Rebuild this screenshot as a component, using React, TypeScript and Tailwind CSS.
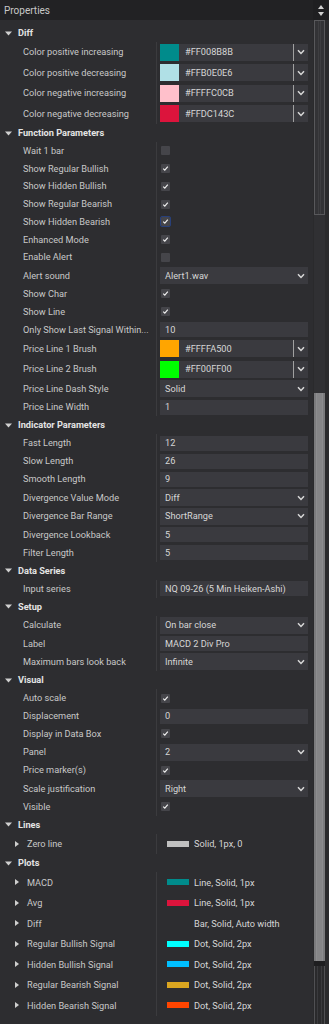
import React from "react";

type Row =
  | { k: "color"; label: string; color: string; hex: string }
  | { k: "check"; label: string; on: boolean; focus?: boolean }
  | { k: "dd"; label: string; value: string }
  | { k: "text"; label: string; value: string }
  | { k: "plot"; label: string; color?: string; desc: string };

type Section = { title: string; rows: Row[] };

const SECTIONS: Section[] = [
  {
    title: "Diff",
    rows: [
      { k: "color", label: "Color positive increasing", color: "#008B8B", hex: "#FF008B8B" },
      { k: "color", label: "Color positive decreasing", color: "#B0E0E6", hex: "#FFB0E0E6" },
      { k: "color", label: "Color negative increasing", color: "#FFC0CB", hex: "#FFFFC0CB" },
      { k: "color", label: "Color negative decreasing", color: "#DC143C", hex: "#FFDC143C" },
    ],
  },
  {
    title: "Function Parameters",
    rows: [
      { k: "check", label: "Wait 1 bar", on: false },
      { k: "check", label: "Show Regular Bullish", on: true },
      { k: "check", label: "Show Hidden Bullish", on: true },
      { k: "check", label: "Show Regular Bearish", on: true },
      { k: "check", label: "Show Hidden Bearish", on: true, focus: true },
      { k: "check", label: "Enhanced Mode", on: true },
      { k: "check", label: "Enable Alert", on: false },
      { k: "dd", label: "Alert sound", value: "Alert1.wav" },
      { k: "check", label: "Show Char", on: true },
      { k: "check", label: "Show Line", on: true },
      { k: "text", label: "Only Show Last Signal Within...", value: "10" },
      { k: "color", label: "Price Line 1 Brush", color: "#FFA500", hex: "#FFFFA500" },
      { k: "color", label: "Price Line 2 Brush", color: "#00FF00", hex: "#FF00FF00" },
      { k: "dd", label: "Price Line Dash Style", value: "Solid" },
      { k: "text", label: "Price Line Width", value: "1" },
    ],
  },
  {
    title: "Indicator Parameters",
    rows: [
      { k: "text", label: "Fast Length", value: "12" },
      { k: "text", label: "Slow Length", value: "26" },
      { k: "text", label: "Smooth Length", value: "9" },
      { k: "dd", label: "Divergence Value Mode", value: "Diff" },
      { k: "dd", label: "Divergence Bar Range", value: "ShortRange" },
      { k: "text", label: "Divergence Lookback", value: "5" },
      { k: "text", label: "Filter Length", value: "5" },
    ],
  },
  {
    title: "Data Series",
    rows: [{ k: "text", label: "Input series", value: "NQ 09-26 (5 Min Heiken-Ashi)" }],
  },
  {
    title: "Setup",
    rows: [
      { k: "dd", label: "Calculate", value: "On bar close" },
      { k: "text", label: "Label", value: "MACD 2 Div Pro" },
      { k: "dd", label: "Maximum bars look back", value: "Infinite" },
    ],
  },
  {
    title: "Visual",
    rows: [
      { k: "check", label: "Auto scale", on: true },
      { k: "text", label: "Displacement", value: "0" },
      { k: "check", label: "Display in Data Box", on: true },
      { k: "dd", label: "Panel", value: "2" },
      { k: "check", label: "Price marker(s)", on: true },
      { k: "dd", label: "Scale justification", value: "Right" },
      { k: "check", label: "Visible", on: true },
    ],
  },
  {
    title: "Lines",
    rows: [{ k: "plot", label: "Zero line", color: "#C0C0C0", desc: "Solid, 1px, 0" }],
  },
  {
    title: "Plots",
    rows: [
      { k: "plot", label: "MACD", color: "#008B8B", desc: "Line, Solid, 1px" },
      { k: "plot", label: "Avg", color: "#DC143C", desc: "Line, Solid, 1px" },
      { k: "plot", label: "Diff", desc: "Bar, Solid, Auto width" },
      { k: "plot", label: "Regular Bullish Signal", color: "#00FFFF", desc: "Dot, Solid, 2px" },
      { k: "plot", label: "Hidden Bullish Signal", color: "#00BFFF", desc: "Dot, Solid, 2px" },
      { k: "plot", label: "Regular Bearish Signal", color: "#DAA520", desc: "Dot, Solid, 2px" },
      { k: "plot", label: "Hidden Bearish Signal", color: "#FF4500", desc: "Dot, Solid, 2px" },
    ],
  },
];

function Chevron() {
  return (
    <svg width="8" height="6" viewBox="0 0 8 6" className="shrink-0">
      <path d="M1 1.2 L4 4.4 L7 1.2" fill="none" stroke="#d8d8d8" strokeWidth="1.5" />
    </svg>
  );
}

function Check({ on, focus }: { on: boolean; focus?: boolean }) {
  return (
    <div
      className={`ml-[1px] flex h-[9px] w-[9px] items-center justify-center rounded-[1px] bg-[#45454a] ${
        focus ? "outline outline-1 outline-[#28407a]" : ""
      }`}
    >
      {on && (
        <svg width="7" height="7" viewBox="0 0 7 7">
          <path d="M1.2 3.6 L2.8 5.1 L5.8 1.6" fill="none" stroke="#f0f0f0" strokeWidth="1.2" />
        </svg>
      )}
    </div>
  );
}

function Value({ row }: { row: Row }) {
  if (row.k === "check") return <Check on={row.on} focus={row.focus} />;
  if (row.k === "color")
    return (
      <div className="flex h-[17px] w-full items-center bg-[#3a3a3f]">
        <div className="h-full w-[19px]" style={{ backgroundColor: row.color }} />
        <span className="ml-[6px] flex-1 text-[#d6d6d6]">{row.hex}</span>
        <div className="h-full w-px bg-[#a0a0a0]" />
        <div className="flex w-[14px] justify-center">
          <Chevron />
        </div>
      </div>
    );
  if (row.k === "dd")
    return (
      <div className="flex h-[17px] w-full items-center bg-[#3a3a3f] pl-[5px]">
        <span className="flex-1 text-[#d6d6d6]">{row.value}</span>
        <div className="flex w-[14px] justify-center">
          <Chevron />
        </div>
      </div>
    );
  if (row.k === "text")
    return (
      <div className="flex h-[15px] w-full items-center bg-[#3a3a3f] pl-[5px] text-[#d6d6d6]">{row.value}</div>
    );
  return (
    <div className="flex items-center pl-[7px]">
      <div className="h-[6px] w-[22px]" style={{ backgroundColor: row.color ?? "transparent" }} />
      <span className="ml-[5px] text-[#d6d6d6]">{row.desc}</span>
    </div>
  );
}

function heightOf(row: Row) {
  if (row.k === "color" || row.k === "plot") return "h-[20.5px]";
  if (row.k === "check") return "h-[17.75px]";
  if (row.k === "dd") return "h-[18.75px]";
  return "h-[18px]";
}

function SectionBlock({ s }: { s: Section }) {
  return (
    <div>
      <div className="flex h-[18px] items-center">
        <svg width="7" height="5" viewBox="0 0 7 5" className="ml-[5px]">
          <path d="M0 0.5 L7 0.5 L3.5 4.5 Z" fill="#d0d0d0" />
        </svg>
        <span className="ml-[6px] font-bold text-[#e4e4e4]">{s.title}</span>
      </div>
      <div className="relative">
        <div className="absolute bottom-0 left-[156px] top-0 w-px bg-[#3b3b3e]" />
        {s.rows.map((r) => (
          <div key={r.label} className={`grid grid-cols-[157px_1fr] items-center ${heightOf(r)}`}>
            <div className="flex items-center overflow-hidden whitespace-nowrap text-[#c8c8c8]">
              {r.k === "plot" ? (
                <>
                  <svg width="4" height="6" viewBox="0 0 4 6" className="ml-[15px]">
                    <path d="M0 0 L4 3 L0 6 Z" fill="#cfcfcf" />
                  </svg>
                  <span className="ml-[8px]">{r.label}</span>
                </>
              ) : (
                <span className="ml-[23px]">{r.label}</span>
              )}
            </div>
            <div className="flex items-center pl-[3px] pr-[5px]">
              <Value row={r} />
            </div>
          </div>
        ))}
      </div>
    </div>
  );
}

export default function App() {
  return (
    <div
      className="flex h-[1024px] w-[329px] flex-col overflow-hidden bg-[#2d2d30] text-[9.2px]"
      style={{ fontFamily: "Roboto, 'Noto Sans', sans-serif" }}
    >
      <div className="flex h-[20px] shrink-0 bg-[#222224]">
        <div className="flex flex-1 items-center pl-[4px] text-[10px] text-[#c8c8c8]">Properties</div>
        <div className="flex w-[16px] flex-col items-center justify-center gap-[3px] bg-[#1f1f21]">
          <svg width="6" height="4" viewBox="0 0 6 4">
            <path d="M0 4 L3 0 L6 4 Z" fill="#d0d0d0" />
          </svg>
          <svg width="6" height="4" viewBox="0 0 6 4">
            <path d="M0 0 L6 0 L3 4 Z" fill="#d0d0d0" />
          </svg>
        </div>
      </div>
      <div className="flex flex-1">
        <div className="flex-1 pt-[4px]">
          {SECTIONS.map((s) => (
            <SectionBlock key={s.title} s={s} />
          ))}
        </div>
        <div className="flex w-[16px] flex-col bg-[#2a2a2c] pl-[1px] pr-[4px]">
          <div className="h-[195px] border border-[#58585b] bg-[#333336] px-[3px]">
            <div className="h-full border-x border-[#3e3e41]" />
          </div>
          <div className="h-[178px] bg-[#303033]" />
          <div className="flex h-[568px] bg-[#7a7a7c] px-[2px]">
            <div className="flex-1 border-x border-[#8c8c8e] bg-[#858587]" />
          </div>
          <div className="h-[5px] bg-[#1e1e20]" />
          <div className="flex flex-1 border-x border-[#505053] px-[2px]">
            <div className="flex-1 border-x border-[#3a3a3d]" />
          </div>
        </div>
      </div>
    </div>
  );
}
